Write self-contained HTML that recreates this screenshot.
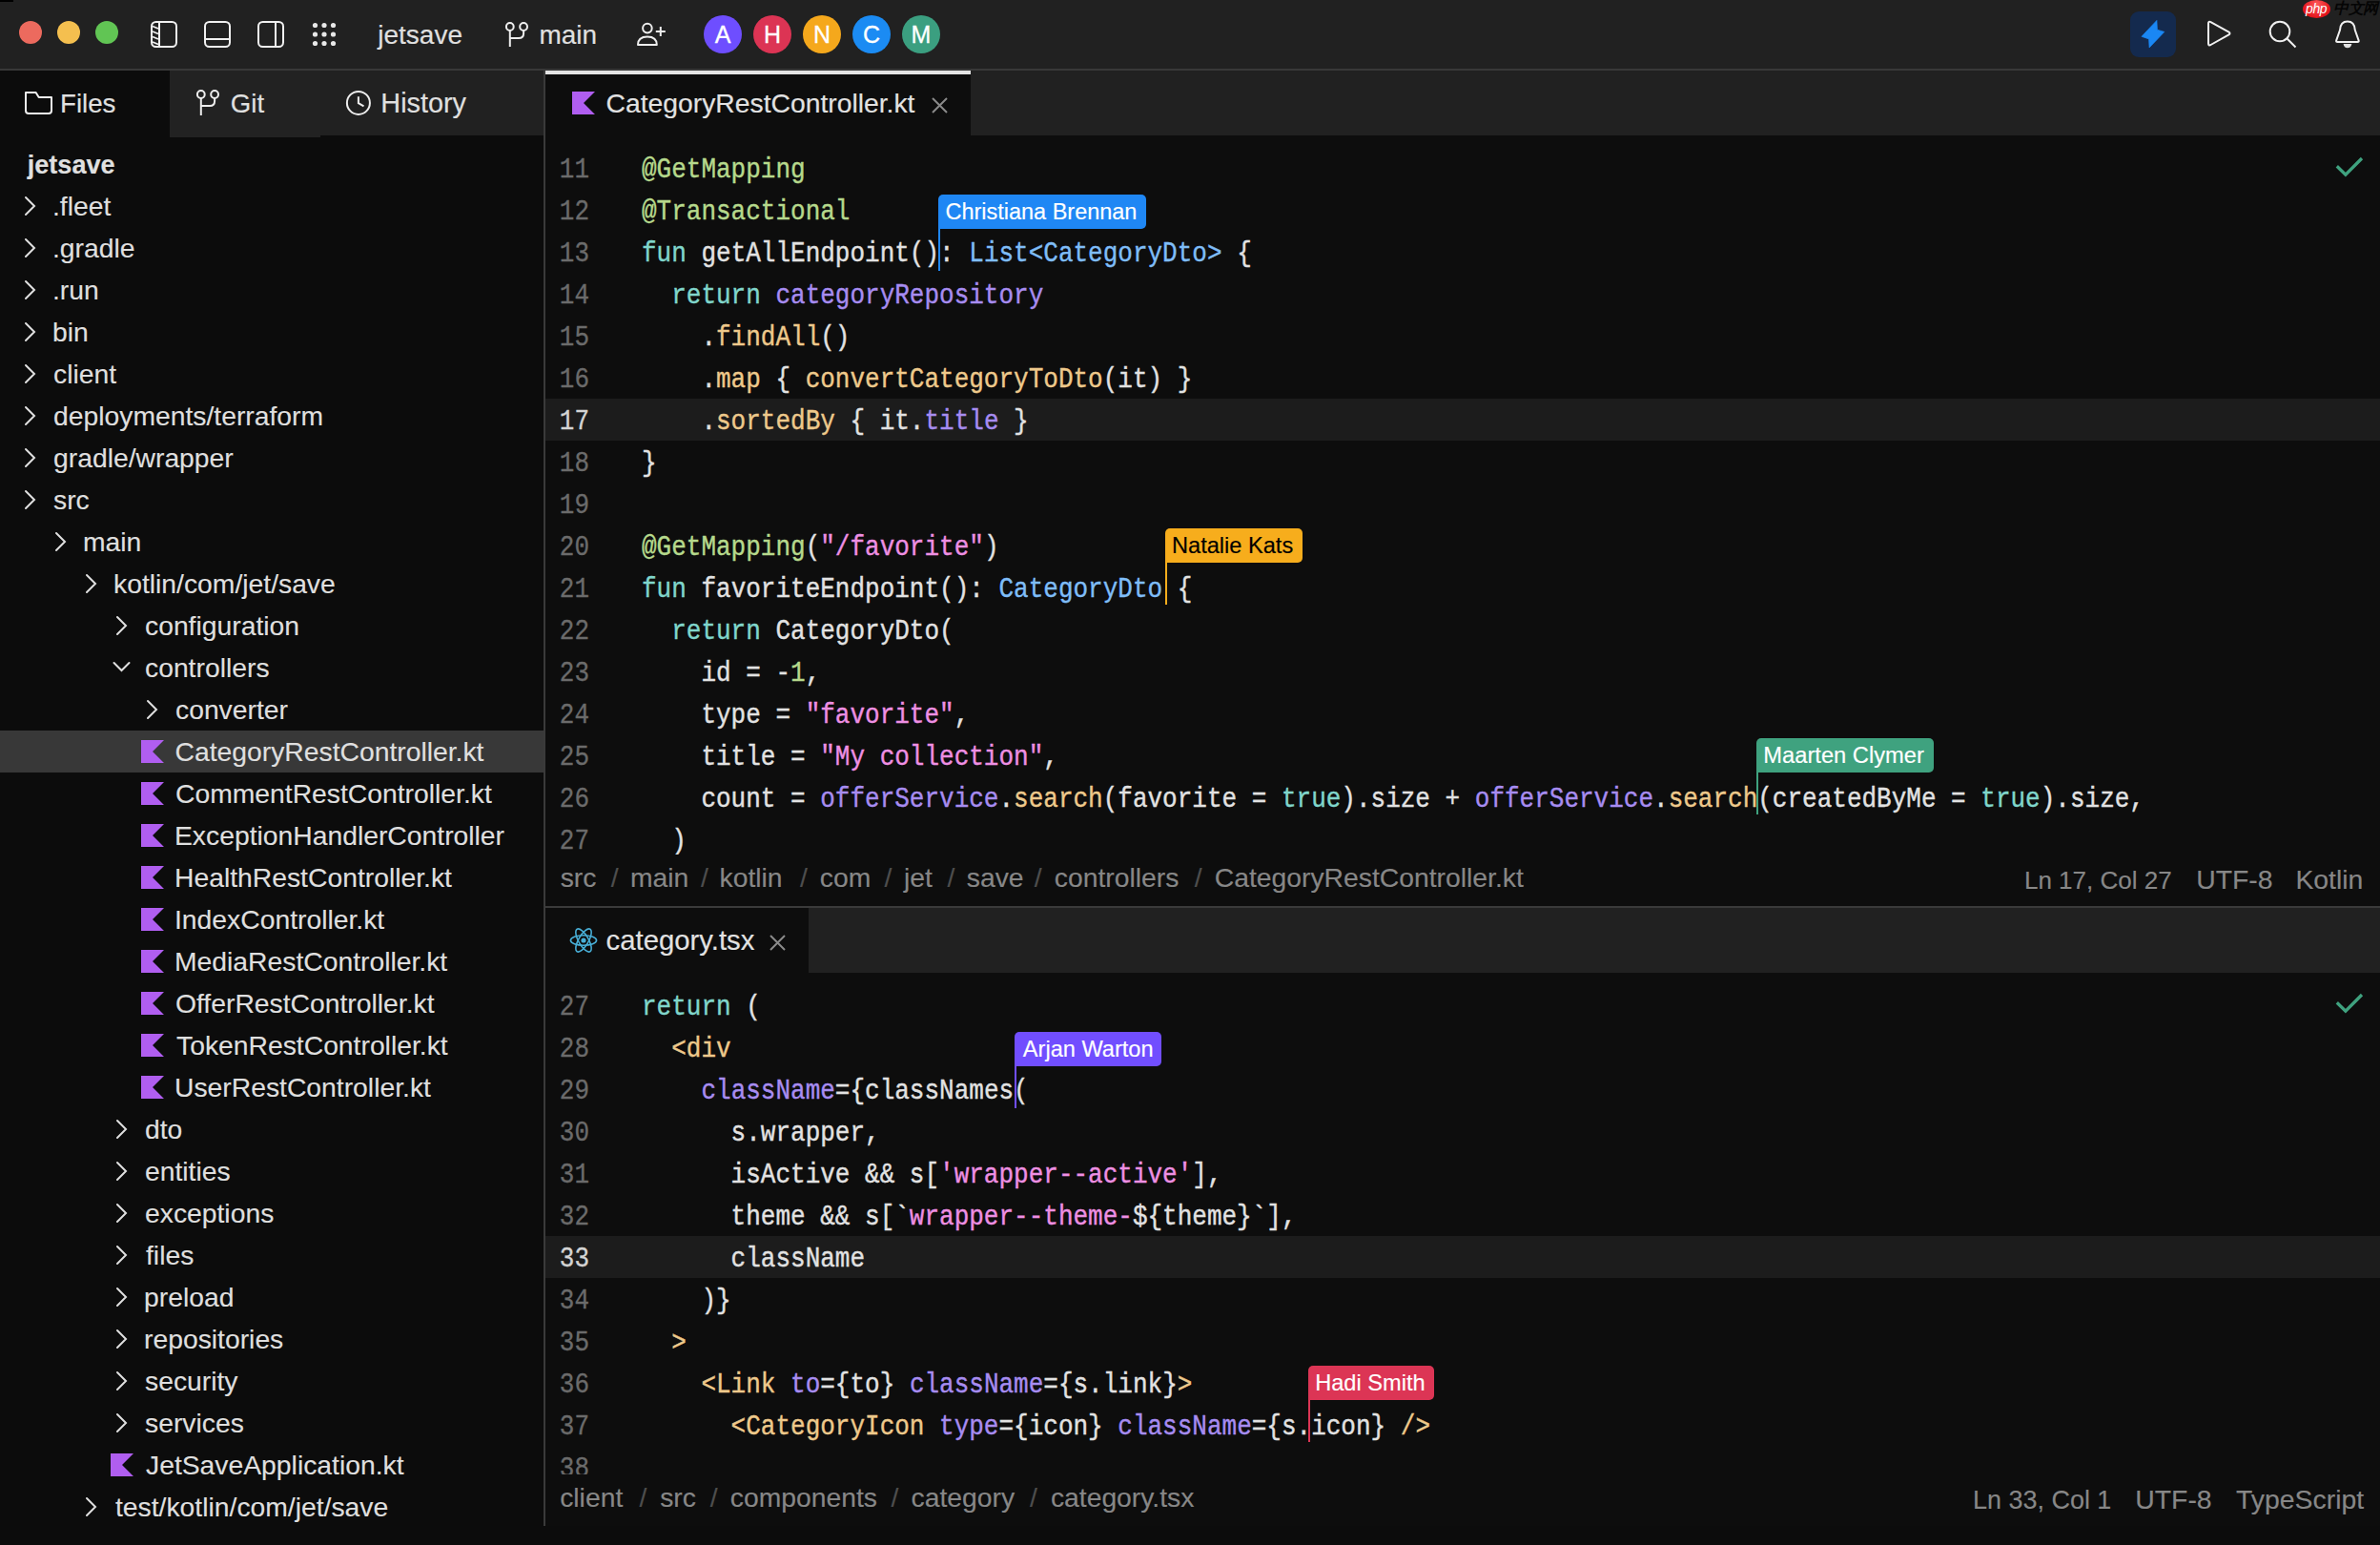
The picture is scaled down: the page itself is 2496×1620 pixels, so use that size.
<!DOCTYPE html>
<html><head><meta charset="utf-8"><title>Fleet</title>
<style>
html,body{margin:0;padding:0;}
body{width:2496px;height:1620px;overflow:hidden;position:relative;background:#0c0c0c;font-family:'Liberation Sans', sans-serif;}
.abs{position:absolute;}
.t{position:absolute;white-space:pre;font-family:'Liberation Sans', sans-serif;line-height:40px;-webkit-text-stroke:0.15px currentColor;}
.ln{position:absolute;left:0;width:46px;height:44px;line-height:44px;text-align:right;font-family:'Liberation Mono', monospace;font-size:26px;padding-top:3px;box-sizing:border-box;transform:scaleY(1.10);transform-origin:0 32px;-webkit-text-stroke:0.3px currentColor;}
.code{position:absolute;left:101px;height:44px;line-height:44px;white-space:pre;font-family:'Liberation Mono', monospace;font-size:26px;padding-top:3px;box-sizing:border-box;transform:scaleY(1.10);transform-origin:0 32px;-webkit-text-stroke:0.35px currentColor;}
</style></head>
<body>
<div class="abs" style="left:0;top:0;width:2496px;height:72px;background:#212121"></div>
<div class="abs" style="left:0;top:72px;width:2496px;height:2px;background:#383838"></div>
<div class="abs" style="left:0;top:0;width:14px;height:2px;background:#000"></div>
<div class="abs" style="left:20px;top:22px;width:24px;height:24px;border-radius:50%;background:#ec6a5e"></div>
<div class="abs" style="left:60px;top:22px;width:24px;height:24px;border-radius:50%;background:#f4bf4f"></div>
<div class="abs" style="left:100px;top:22px;width:24px;height:24px;border-radius:50%;background:#61c554"></div>
<svg class="abs" style="left:157px;top:21px" width="30" height="30" viewBox="0 0 30 30" fill="none"><rect x="2" y="2" width="26" height="26" rx="4.5" stroke="#f0f0f0" stroke-width="2"/><line x1="10" y1="2" x2="10" y2="28" stroke="#f0f0f0" stroke-width="2"/><line x1="3" y1="6.5" x2="9" y2="9.0" stroke="#f0f0f0" stroke-width="1.8"/><line x1="3" y1="12" x2="9" y2="14.5" stroke="#f0f0f0" stroke-width="1.8"/><line x1="3" y1="17.5" x2="9" y2="20.0" stroke="#f0f0f0" stroke-width="1.8"/><line x1="3" y1="23" x2="9" y2="25.5" stroke="#f0f0f0" stroke-width="1.8"/></svg>
<svg class="abs" style="left:213px;top:21px" width="30" height="30" viewBox="0 0 30 30" fill="none"><rect x="2" y="2" width="26" height="26" rx="4.5" stroke="#f0f0f0" stroke-width="2"/><line x1="2" y1="20" x2="28" y2="20" stroke="#f0f0f0" stroke-width="2"/></svg>
<svg class="abs" style="left:269px;top:21px" width="30" height="30" viewBox="0 0 30 30" fill="none"><rect x="2" y="2" width="26" height="26" rx="4.5" stroke="#f0f0f0" stroke-width="2"/><line x1="20" y1="2" x2="20" y2="28" stroke="#f0f0f0" stroke-width="2"/></svg>
<svg class="abs" style="left:326px;top:22px" width="28" height="28" viewBox="0 0 28 28" fill="none"><circle cx="4.5" cy="4.5" r="2.6" fill="#e8e8e8"/><circle cx="4.5" cy="14.0" r="2.6" fill="#e8e8e8"/><circle cx="4.5" cy="23.5" r="2.6" fill="#e8e8e8"/><circle cx="14.0" cy="4.5" r="2.6" fill="#e8e8e8"/><circle cx="14.0" cy="14.0" r="2.6" fill="#e8e8e8"/><circle cx="14.0" cy="23.5" r="2.6" fill="#e8e8e8"/><circle cx="23.5" cy="4.5" r="2.6" fill="#e8e8e8"/><circle cx="23.5" cy="14.0" r="2.6" fill="#e8e8e8"/><circle cx="23.5" cy="23.5" r="2.6" fill="#e8e8e8"/></svg>
<div class="t" style="left:396.30px;top:17.20px;font-size:27.99px;color:#e0e0e0;font-weight:normal">jetsave</div>
<svg class="abs" style="left:526px;top:20px" width="30" height="32" viewBox="0 0 30 32" fill="none"><circle cx="8.8" cy="8" r="3.9" stroke="#eeeeee" stroke-width="2"/><circle cx="23.1" cy="8" r="3.9" stroke="#eeeeee" stroke-width="2"/><path d="M8.8 12 V29" stroke="#eeeeee" stroke-width="2"/><path d="M23.1 12 V15 Q23.1 20 18 20 H8.8" stroke="#eeeeee" stroke-width="2"/></svg>
<div class="t" style="left:565.40px;top:17.20px;font-size:27.959px;color:#e0e0e0;font-weight:normal">main</div>
<svg class="abs" style="left:664px;top:20px" width="34" height="32" viewBox="0 0 34 32" fill="none"><circle cx="14.9" cy="9.6" r="4.8" stroke="#eeeeee" stroke-width="2"/><path d="M5 27 Q5 18.5 14.9 18.5 Q24.8 18.5 24.8 27 Z" stroke="#eeeeee" stroke-width="2" stroke-linejoin="round"/><path d="M28.8 7.9 V17.9 M23.8 12.9 H33.8" stroke="#eeeeee" stroke-width="2"/></svg>
<div class="abs" style="left:738px;top:16px;width:40px;height:40px;border-radius:50%;background:#6e4eff"></div>
<div class="abs" style="left:738px;top:16px;width:40px;height:40px;line-height:40px;text-align:center;font-family:'Liberation Sans', sans-serif;font-size:25px;color:#fff;-webkit-text-stroke:0.3px #fff">A</div>
<div class="abs" style="left:790px;top:16px;width:40px;height:40px;border-radius:50%;background:#dc3454"></div>
<div class="abs" style="left:790px;top:16px;width:40px;height:40px;line-height:40px;text-align:center;font-family:'Liberation Sans', sans-serif;font-size:25px;color:#fff;-webkit-text-stroke:0.3px #fff">H</div>
<div class="abs" style="left:842px;top:16px;width:40px;height:40px;border-radius:50%;background:#f5a81c"></div>
<div class="abs" style="left:842px;top:16px;width:40px;height:40px;line-height:40px;text-align:center;font-family:'Liberation Sans', sans-serif;font-size:25px;color:#fff;-webkit-text-stroke:0.3px #fff">N</div>
<div class="abs" style="left:894px;top:16px;width:40px;height:40px;border-radius:50%;background:#1b8bf3"></div>
<div class="abs" style="left:894px;top:16px;width:40px;height:40px;line-height:40px;text-align:center;font-family:'Liberation Sans', sans-serif;font-size:25px;color:#fff;-webkit-text-stroke:0.3px #fff">C</div>
<div class="abs" style="left:946px;top:16px;width:40px;height:40px;border-radius:50%;background:#3b9f80"></div>
<div class="abs" style="left:946px;top:16px;width:40px;height:40px;line-height:40px;text-align:center;font-family:'Liberation Sans', sans-serif;font-size:25px;color:#fff;-webkit-text-stroke:0.3px #fff">M</div>
<div class="abs" style="left:2234px;top:12px;width:48px;height:48px;border-radius:9px;background:#142a4e"></div>
<svg class="abs" style="left:2234px;top:12px" width="48" height="48" viewBox="0 0 48 48" fill="none"><path d="M27.9 9.4 L28.4 19.2 L35.8 21.4 L20.1 37.9 L19.6 28.9 L12 26.3 Z" fill="#1a87f4" stroke="#1a87f4" stroke-width="0.7" stroke-linejoin="round"/></svg>
<svg class="abs" style="left:2310px;top:18px" width="34" height="36" viewBox="0 0 34 36" fill="none"><path d="M6 6.5 Q6 4 8.5 5.2 L27.5 15.6 Q29.5 17 27.5 18.4 L8.5 29 Q6 30.2 6 27.7 Z" stroke="#f0f0f0" stroke-width="2" stroke-linejoin="round"/></svg>
<svg class="abs" style="left:2374px;top:16px" width="40" height="40" viewBox="0 0 40 40" fill="none"><circle cx="17" cy="17" r="10.3" stroke="#f0f0f0" stroke-width="2"/><path d="M24.3 24.3 L33.5 33.5" stroke="#f0f0f0" stroke-width="2"/></svg>
<svg class="abs" style="left:2444px;top:16px" width="36" height="40" viewBox="0 0 36 40" fill="none"><path d="M17.9 6.6 C11.8 6.6 10.3 10.5 10 15.5 L6.2 26.4 Q5.7 28 7.4 28 H28.4 Q30.1 28 29.6 26.4 L25.8 15.5 C25.5 10.5 24 6.6 17.9 6.6 Z" stroke="#f0f0f0" stroke-width="2" stroke-linejoin="round"/><path d="M13.6 30 H22.4 Q21.6 34.2 17.9 34.2 Q14.2 34.2 13.6 30 Z" fill="#e0e0e0"/></svg>
<div class="abs" style="left:2415px;top:0px;width:29px;height:19px;border-radius:50%;background:radial-gradient(ellipse at 50% 25%, #ff5a5a, #e3141c 70%)"></div>
<div class="abs" style="left:2418px;top:1px;font-family:'Liberation Sans', sans-serif;font-size:14px;line-height:16px;font-style:italic;color:#fff;letter-spacing:-0.4px">php</div>
<div class="abs" style="left:2447px;top:1px;font-family:'Liberation Sans', sans-serif;font-size:16px;line-height:16px;font-style:italic;font-weight:bold;color:#050505;letter-spacing:-0.5px">中文网</div>
<div class="abs" style="left:0;top:74px;width:570px;height:1546px;background:#0c0c0c"></div>
<div class="abs" style="left:178px;top:74px;width:158px;height:70px;background:#222222"></div>
<div class="abs" style="left:336px;top:74px;width:234px;height:68px;background:#212121"></div>
<svg class="abs" style="left:24px;top:94px" width="32" height="28" viewBox="0 0 32 28" fill="none"><path d="M3 3 H13.6 L16.7 8 H30 V22 Q30 25 27 25 H6 Q3 25 3 22 Z" stroke="#f0f0f0" stroke-width="2" stroke-linejoin="round"/></svg>
<div class="t" style="left:63.00px;top:89.00px;font-size:27.702px;color:#e0e0e0;font-weight:normal">Files</div>
<svg class="abs" style="left:202px;top:92px" width="32" height="32" viewBox="0 0 32 32" fill="none"><circle cx="8.8" cy="7" r="3.9" stroke="#eeeeee" stroke-width="2"/><circle cx="23.1" cy="7" r="3.9" stroke="#eeeeee" stroke-width="2"/><path d="M8.8 11 V29" stroke="#eeeeee" stroke-width="2"/><path d="M23.1 11 V14 Q23.1 19 18 19 H8.8" stroke="#eeeeee" stroke-width="2"/></svg>
<div class="t" style="left:241.80px;top:89.40px;font-size:27.633px;color:#e0e0e0;font-weight:normal">Git</div>
<svg class="abs" style="left:360px;top:92px" width="32" height="32" viewBox="0 0 32 32" fill="none"><circle cx="15.9" cy="15.9" r="12" stroke="#eeeeee" stroke-width="2"/><path d="M15.9 9.2 V16.2 L21.5 19.4" stroke="#eeeeee" stroke-width="2"/></svg>
<div class="t" style="left:399.30px;top:88.40px;font-size:28.859px;color:#e0e0e0;font-weight:normal">History</div>
<div class="abs" style="left:0;top:766px;width:570px;height:44px;background:#383838"></div>
<div class="t" style="left:28.80px;top:153.00px;font-size:27.055px;color:#e0e0e0;font-weight:bold">jetsave</div>
<svg class="abs" style="left:25px;top:205px" width="14" height="22" viewBox="0 0 14 22" fill="none"><path d="M2 2 L11 11 L2 20" stroke="#e0e0e0" stroke-width="2" stroke-linecap="round"/></svg>
<div class="t" style="left:55.00px;top:196.00px;font-size:28.3px;color:#dfdfdf;font-weight:normal">.fleet</div>
<svg class="abs" style="left:25px;top:249px" width="14" height="22" viewBox="0 0 14 22" fill="none"><path d="M2 2 L11 11 L2 20" stroke="#e0e0e0" stroke-width="2" stroke-linecap="round"/></svg>
<div class="t" style="left:55.00px;top:240.00px;font-size:28.3px;color:#dfdfdf;font-weight:normal">.gradle</div>
<svg class="abs" style="left:25px;top:293px" width="14" height="22" viewBox="0 0 14 22" fill="none"><path d="M2 2 L11 11 L2 20" stroke="#e0e0e0" stroke-width="2" stroke-linecap="round"/></svg>
<div class="t" style="left:55.00px;top:284.00px;font-size:28.3px;color:#dfdfdf;font-weight:normal">.run</div>
<svg class="abs" style="left:25px;top:337px" width="14" height="22" viewBox="0 0 14 22" fill="none"><path d="M2 2 L11 11 L2 20" stroke="#e0e0e0" stroke-width="2" stroke-linecap="round"/></svg>
<div class="t" style="left:55.00px;top:328.00px;font-size:28.3px;color:#dfdfdf;font-weight:normal">bin</div>
<svg class="abs" style="left:25px;top:381px" width="14" height="22" viewBox="0 0 14 22" fill="none"><path d="M2 2 L11 11 L2 20" stroke="#e0e0e0" stroke-width="2" stroke-linecap="round"/></svg>
<div class="t" style="left:56.00px;top:372.00px;font-size:28.3px;color:#dfdfdf;font-weight:normal">client</div>
<svg class="abs" style="left:25px;top:425px" width="14" height="22" viewBox="0 0 14 22" fill="none"><path d="M2 2 L11 11 L2 20" stroke="#e0e0e0" stroke-width="2" stroke-linecap="round"/></svg>
<div class="t" style="left:56.00px;top:416.00px;font-size:28.3px;color:#dfdfdf;font-weight:normal">deployments/terraform</div>
<svg class="abs" style="left:25px;top:469px" width="14" height="22" viewBox="0 0 14 22" fill="none"><path d="M2 2 L11 11 L2 20" stroke="#e0e0e0" stroke-width="2" stroke-linecap="round"/></svg>
<div class="t" style="left:56.00px;top:460.00px;font-size:28.3px;color:#dfdfdf;font-weight:normal">gradle/wrapper</div>
<svg class="abs" style="left:25px;top:513px" width="14" height="22" viewBox="0 0 14 22" fill="none"><path d="M2 2 L11 11 L2 20" stroke="#e0e0e0" stroke-width="2" stroke-linecap="round"/></svg>
<div class="t" style="left:56.00px;top:504.00px;font-size:28.3px;color:#dfdfdf;font-weight:normal">src</div>
<svg class="abs" style="left:57px;top:557px" width="14" height="22" viewBox="0 0 14 22" fill="none"><path d="M2 2 L11 11 L2 20" stroke="#e0e0e0" stroke-width="2" stroke-linecap="round"/></svg>
<div class="t" style="left:87.00px;top:548.00px;font-size:28.3px;color:#dfdfdf;font-weight:normal">main</div>
<svg class="abs" style="left:89px;top:601px" width="14" height="22" viewBox="0 0 14 22" fill="none"><path d="M2 2 L11 11 L2 20" stroke="#e0e0e0" stroke-width="2" stroke-linecap="round"/></svg>
<div class="t" style="left:119.00px;top:592.00px;font-size:28.3px;color:#dfdfdf;font-weight:normal">kotlin/com/jet/save</div>
<svg class="abs" style="left:121px;top:645px" width="14" height="22" viewBox="0 0 14 22" fill="none"><path d="M2 2 L11 11 L2 20" stroke="#e0e0e0" stroke-width="2" stroke-linecap="round"/></svg>
<div class="t" style="left:152.00px;top:636.00px;font-size:28.3px;color:#dfdfdf;font-weight:normal">configuration</div>
<svg class="abs" style="left:118px;top:693px" width="20" height="14" viewBox="0 0 20 14" fill="none"><path d="M1.5 2 L9.5 10 L17.5 2" stroke="#e0e0e0" stroke-width="2" stroke-linecap="round"/></svg>
<div class="t" style="left:152.00px;top:680.00px;font-size:28.3px;color:#dfdfdf;font-weight:normal">controllers</div>
<svg class="abs" style="left:153px;top:733px" width="14" height="22" viewBox="0 0 14 22" fill="none"><path d="M2 2 L11 11 L2 20" stroke="#e0e0e0" stroke-width="2" stroke-linecap="round"/></svg>
<div class="t" style="left:184.00px;top:724.00px;font-size:28.3px;color:#dfdfdf;font-weight:normal">converter</div>
<svg class="abs" style="left:148px;top:776px" width="24" height="24" viewBox="0 0 24 24" fill="none"><path d="M0 0 H24 L12 12 L24 24 H0 Z" fill="#b05ef0"/></svg>
<div class="t" style="left:183.50px;top:768.00px;font-size:28.304px;color:#dfdfdf;font-weight:normal">CategoryRestController.kt</div>
<svg class="abs" style="left:148px;top:820px" width="24" height="24" viewBox="0 0 24 24" fill="none"><path d="M0 0 H24 L12 12 L24 24 H0 Z" fill="#b05ef0"/></svg>
<div class="t" style="left:184.00px;top:812.00px;font-size:28.3px;color:#dfdfdf;font-weight:normal">CommentRestController.kt</div>
<svg class="abs" style="left:148px;top:864px" width="24" height="24" viewBox="0 0 24 24" fill="none"><path d="M0 0 H24 L12 12 L24 24 H0 Z" fill="#b05ef0"/></svg>
<div class="t" style="left:183.00px;top:856.00px;font-size:28.3px;color:#dfdfdf;font-weight:normal">ExceptionHandlerController</div>
<svg class="abs" style="left:148px;top:908px" width="24" height="24" viewBox="0 0 24 24" fill="none"><path d="M0 0 H24 L12 12 L24 24 H0 Z" fill="#b05ef0"/></svg>
<div class="t" style="left:183.00px;top:900.00px;font-size:28.3px;color:#dfdfdf;font-weight:normal">HealthRestController.kt</div>
<svg class="abs" style="left:148px;top:952px" width="24" height="24" viewBox="0 0 24 24" fill="none"><path d="M0 0 H24 L12 12 L24 24 H0 Z" fill="#b05ef0"/></svg>
<div class="t" style="left:183.00px;top:944.00px;font-size:28.3px;color:#dfdfdf;font-weight:normal">IndexController.kt</div>
<svg class="abs" style="left:148px;top:996px" width="24" height="24" viewBox="0 0 24 24" fill="none"><path d="M0 0 H24 L12 12 L24 24 H0 Z" fill="#b05ef0"/></svg>
<div class="t" style="left:183.00px;top:988.00px;font-size:28.3px;color:#dfdfdf;font-weight:normal">MediaRestController.kt</div>
<svg class="abs" style="left:148px;top:1040px" width="24" height="24" viewBox="0 0 24 24" fill="none"><path d="M0 0 H24 L12 12 L24 24 H0 Z" fill="#b05ef0"/></svg>
<div class="t" style="left:184.00px;top:1032.00px;font-size:28.3px;color:#dfdfdf;font-weight:normal">OfferRestController.kt</div>
<svg class="abs" style="left:148px;top:1084px" width="24" height="24" viewBox="0 0 24 24" fill="none"><path d="M0 0 H24 L12 12 L24 24 H0 Z" fill="#b05ef0"/></svg>
<div class="t" style="left:185.00px;top:1076.00px;font-size:28.3px;color:#dfdfdf;font-weight:normal">TokenRestController.kt</div>
<svg class="abs" style="left:148px;top:1128px" width="24" height="24" viewBox="0 0 24 24" fill="none"><path d="M0 0 H24 L12 12 L24 24 H0 Z" fill="#b05ef0"/></svg>
<div class="t" style="left:183.00px;top:1120.00px;font-size:28.3px;color:#dfdfdf;font-weight:normal">UserRestController.kt</div>
<svg class="abs" style="left:121px;top:1173px" width="14" height="22" viewBox="0 0 14 22" fill="none"><path d="M2 2 L11 11 L2 20" stroke="#e0e0e0" stroke-width="2" stroke-linecap="round"/></svg>
<div class="t" style="left:152.00px;top:1164.00px;font-size:28.3px;color:#dfdfdf;font-weight:normal">dto</div>
<svg class="abs" style="left:121px;top:1217px" width="14" height="22" viewBox="0 0 14 22" fill="none"><path d="M2 2 L11 11 L2 20" stroke="#e0e0e0" stroke-width="2" stroke-linecap="round"/></svg>
<div class="t" style="left:152.00px;top:1208.00px;font-size:28.3px;color:#dfdfdf;font-weight:normal">entities</div>
<svg class="abs" style="left:121px;top:1261px" width="14" height="22" viewBox="0 0 14 22" fill="none"><path d="M2 2 L11 11 L2 20" stroke="#e0e0e0" stroke-width="2" stroke-linecap="round"/></svg>
<div class="t" style="left:152.00px;top:1252.00px;font-size:28.3px;color:#dfdfdf;font-weight:normal">exceptions</div>
<svg class="abs" style="left:121px;top:1305px" width="14" height="22" viewBox="0 0 14 22" fill="none"><path d="M2 2 L11 11 L2 20" stroke="#e0e0e0" stroke-width="2" stroke-linecap="round"/></svg>
<div class="t" style="left:153.00px;top:1296.00px;font-size:28.3px;color:#dfdfdf;font-weight:normal">files</div>
<svg class="abs" style="left:121px;top:1349px" width="14" height="22" viewBox="0 0 14 22" fill="none"><path d="M2 2 L11 11 L2 20" stroke="#e0e0e0" stroke-width="2" stroke-linecap="round"/></svg>
<div class="t" style="left:151.00px;top:1340.00px;font-size:28.3px;color:#dfdfdf;font-weight:normal">preload</div>
<svg class="abs" style="left:121px;top:1393px" width="14" height="22" viewBox="0 0 14 22" fill="none"><path d="M2 2 L11 11 L2 20" stroke="#e0e0e0" stroke-width="2" stroke-linecap="round"/></svg>
<div class="t" style="left:151.00px;top:1384.00px;font-size:28.3px;color:#dfdfdf;font-weight:normal">repositories</div>
<svg class="abs" style="left:121px;top:1437px" width="14" height="22" viewBox="0 0 14 22" fill="none"><path d="M2 2 L11 11 L2 20" stroke="#e0e0e0" stroke-width="2" stroke-linecap="round"/></svg>
<div class="t" style="left:152.00px;top:1428.00px;font-size:28.3px;color:#dfdfdf;font-weight:normal">security</div>
<svg class="abs" style="left:121px;top:1481px" width="14" height="22" viewBox="0 0 14 22" fill="none"><path d="M2 2 L11 11 L2 20" stroke="#e0e0e0" stroke-width="2" stroke-linecap="round"/></svg>
<div class="t" style="left:152.00px;top:1472.00px;font-size:28.3px;color:#dfdfdf;font-weight:normal">services</div>
<svg class="abs" style="left:116px;top:1524px" width="24" height="24" viewBox="0 0 24 24" fill="none"><path d="M0 0 H24 L12 12 L24 24 H0 Z" fill="#b05ef0"/></svg>
<div class="t" style="left:153.00px;top:1516.00px;font-size:28.3px;color:#dfdfdf;font-weight:normal">JetSaveApplication.kt</div>
<svg class="abs" style="left:89px;top:1569px" width="14" height="22" viewBox="0 0 14 22" fill="none"><path d="M2 2 L11 11 L2 20" stroke="#e0e0e0" stroke-width="2" stroke-linecap="round"/></svg>
<div class="t" style="left:121.00px;top:1560.00px;font-size:28.3px;color:#dfdfdf;font-weight:normal">test/kotlin/com/jet/save</div>
<div class="abs" style="left:570px;top:74px;width:2px;height:1526px;background:#3a3a3a"></div>
<div class="abs" style="left:572px;top:74px;width:1924px;height:68px;background:#212121"></div>
<div class="abs" style="left:572px;top:74px;width:446px;height:68px;background:#0d0d0d"></div>
<div class="abs" style="left:572px;top:74px;width:446px;height:4px;background:#e4e4e4"></div>
<svg class="abs" style="left:600px;top:96px" width="24" height="24" viewBox="0 0 24 24" fill="none"><path d="M0 0 H24 L12 12 L24 24 H0 Z" fill="#b05ef0"/></svg>
<div class="t" style="left:635.60px;top:88.40px;font-size:28.295px;color:#e2e2e2;font-weight:normal">CategoryRestController.kt</div>
<svg class="abs" style="left:976px;top:100px" width="20" height="20" viewBox="0 0 20 20" fill="none"><path d="M2 3 L17 18 M17 3 L2 18" stroke="#8a8a8a" stroke-width="2"/></svg>
<div class="abs" style="left:572px;top:142px;width:1924px;height:754px;background:#0d0d0d;overflow:hidden">
<div class="ln" style="top:12px;color:#6b6b6b">11</div>
<div class="code" style="top:12px"><span style="color:#b6d98c">@GetMapping</span></div>
<div class="ln" style="top:56px;color:#6b6b6b">12</div>
<div class="code" style="top:56px"><span style="color:#b6d98c">@Transactional</span></div>
<div class="ln" style="top:100px;color:#6b6b6b">13</div>
<div class="code" style="top:100px"><span style="color:#80d6cb">fun </span><span style="color:#e2e2e2">getAllEndpoint</span><span style="color:#e2e2e2">(): </span><span style="color:#7fbdf8">List&lt;CategoryDto&gt;</span><span style="color:#e2e2e2"> {</span></div>
<div class="ln" style="top:144px;color:#6b6b6b">14</div>
<div class="code" style="top:144px"><span style="color:#80d6cb">  return </span><span style="color:#a78cf1">categoryRepository</span></div>
<div class="ln" style="top:188px;color:#6b6b6b">15</div>
<div class="code" style="top:188px"><span style="color:#e2e2e2">    .</span><span style="color:#eec98b">findAll</span><span style="color:#e2e2e2">()</span></div>
<div class="ln" style="top:232px;color:#6b6b6b">16</div>
<div class="code" style="top:232px"><span style="color:#e2e2e2">    .</span><span style="color:#eec98b">map</span><span style="color:#e2e2e2"> { </span><span style="color:#eec98b">convertCategoryToDto</span><span style="color:#e2e2e2">(it) }</span></div>
<div class="abs" style="left:0;top:276px;width:1924px;height:44px;background:#1c1c1c"></div>
<div class="ln" style="top:276px;color:#d4d4d4">17</div>
<div class="code" style="top:276px"><span style="color:#e2e2e2">    .</span><span style="color:#eec98b">sortedBy</span><span style="color:#e2e2e2"> { it.</span><span style="color:#a78cf1">title</span><span style="color:#e2e2e2"> }</span></div>
<div class="ln" style="top:320px;color:#6b6b6b">18</div>
<div class="code" style="top:320px"><span style="color:#e2e2e2">}</span></div>
<div class="ln" style="top:364px;color:#6b6b6b">19</div>
<div class="code" style="top:364px"><span style="color:#e2e2e2"></span></div>
<div class="ln" style="top:408px;color:#6b6b6b">20</div>
<div class="code" style="top:408px"><span style="color:#b6d98c">@GetMapping</span><span style="color:#e2e2e2">(</span><span style="color:#ee8fe3">&quot;/favorite&quot;</span><span style="color:#e2e2e2">)</span></div>
<div class="ln" style="top:452px;color:#6b6b6b">21</div>
<div class="code" style="top:452px"><span style="color:#80d6cb">fun </span><span style="color:#e2e2e2">favoriteEndpoint</span><span style="color:#e2e2e2">(): </span><span style="color:#7fbdf8">CategoryDto</span><span style="color:#e2e2e2"> {</span></div>
<div class="ln" style="top:496px;color:#6b6b6b">22</div>
<div class="code" style="top:496px"><span style="color:#80d6cb">  return </span><span style="color:#e2e2e2">CategoryDto(</span></div>
<div class="ln" style="top:540px;color:#6b6b6b">23</div>
<div class="code" style="top:540px"><span style="color:#e2e2e2">    id = -</span><span style="color:#b6d98c">1</span><span style="color:#e2e2e2">,</span></div>
<div class="ln" style="top:584px;color:#6b6b6b">24</div>
<div class="code" style="top:584px"><span style="color:#e2e2e2">    type = </span><span style="color:#ee8fe3">&quot;favorite&quot;</span><span style="color:#e2e2e2">,</span></div>
<div class="ln" style="top:628px;color:#6b6b6b">25</div>
<div class="code" style="top:628px"><span style="color:#e2e2e2">    title = </span><span style="color:#ee8fe3">&quot;My collection&quot;</span><span style="color:#e2e2e2">,</span></div>
<div class="ln" style="top:672px;color:#6b6b6b">26</div>
<div class="code" style="top:672px"><span style="color:#e2e2e2">    count = </span><span style="color:#a78cf1">offerService</span><span style="color:#e2e2e2">.</span><span style="color:#eec98b">search</span><span style="color:#e2e2e2">(favorite = </span><span style="color:#80d6cb">true</span><span style="color:#e2e2e2">).size + </span><span style="color:#a78cf1">offerService</span><span style="color:#e2e2e2">.</span><span style="color:#eec98b">search</span><span style="color:#e2e2e2">(createdByMe = </span><span style="color:#80d6cb">true</span><span style="color:#e2e2e2">).size,</span></div>
<div class="ln" style="top:716px;color:#6b6b6b">27</div>
<div class="code" style="top:716px"><span style="color:#e2e2e2">  )</span></div>
</div>
<svg class="abs" style="left:2446px;top:161px" width="36" height="28" viewBox="0 0 36 28" fill="none"><path d="M4.8 13.2 L13.9 22.1 L31 5" stroke="#3fa27f" stroke-width="3.3"/></svg>
<div class="abs" style="left:572px;top:896px;width:1924px;height:54px;background:#0d0d0d"></div>
<div class="abs" style="left:572px;top:950px;width:1924px;height:2px;background:#3a3a3a"></div>
<div class="t" style="left:587.70px;top:900.00px;font-size:28.3px;color:#878787;font-weight:normal">src</div>
<div class="t" style="left:640.70px;top:900.00px;font-size:28.3px;color:#4e4e4e;font-weight:normal">/</div>
<div class="t" style="left:661.00px;top:900.00px;font-size:28.3px;color:#878787;font-weight:normal">main</div>
<div class="t" style="left:735.10px;top:900.00px;font-size:28.3px;color:#4e4e4e;font-weight:normal">/</div>
<div class="t" style="left:754.50px;top:900.00px;font-size:28.3px;color:#878787;font-weight:normal">kotlin</div>
<div class="t" style="left:838.90px;top:900.00px;font-size:28.3px;color:#4e4e4e;font-weight:normal">/</div>
<div class="t" style="left:859.80px;top:900.00px;font-size:28.3px;color:#878787;font-weight:normal">com</div>
<div class="t" style="left:927.40px;top:900.00px;font-size:28.3px;color:#4e4e4e;font-weight:normal">/</div>
<div class="t" style="left:948.00px;top:900.00px;font-size:28.3px;color:#878787;font-weight:normal">jet</div>
<div class="t" style="left:993.40px;top:900.00px;font-size:28.3px;color:#4e4e4e;font-weight:normal">/</div>
<div class="t" style="left:1013.80px;top:900.00px;font-size:28.3px;color:#878787;font-weight:normal">save</div>
<div class="t" style="left:1084.70px;top:900.00px;font-size:28.3px;color:#4e4e4e;font-weight:normal">/</div>
<div class="t" style="left:1105.80px;top:900.00px;font-size:28.3px;color:#878787;font-weight:normal">controllers</div>
<div class="t" style="left:1252.70px;top:900.00px;font-size:28.3px;color:#4e4e4e;font-weight:normal">/</div>
<div class="t" style="left:1273.80px;top:900.00px;font-size:28.3px;color:#878787;font-weight:normal">CategoryRestController.kt</div>
<div class="t" style="left:2122.90px;top:903.40px;font-size:26.056px;color:#878787;font-weight:normal">Ln 17, Col 27</div>
<div class="t" style="left:2303.20px;top:902.40px;font-size:28.4px;color:#878787;font-weight:normal">UTF-8</div>
<div class="t" style="left:2407.40px;top:902.40px;font-size:28.4px;color:#878787;font-weight:normal">Kotlin</div>
<div class="abs" style="left:572px;top:952px;width:1924px;height:68px;background:#212121"></div>
<div class="abs" style="left:572px;top:952px;width:276px;height:68px;background:#0d0d0d"></div>
<svg class="abs" style="left:596px;top:970px" width="32" height="32" viewBox="0 0 32 32" fill="none"><g stroke="#48aed6" stroke-width="1.6" fill="none" transform="translate(16 16)"><ellipse rx="13.6" ry="5.2"/><ellipse rx="13.6" ry="5.2" transform="rotate(60)"/><ellipse rx="13.6" ry="5.2" transform="rotate(120)"/></g><circle cx="16" cy="16" r="2.6" fill="#48aed6"/></svg>
<div class="t" style="left:635.60px;top:966.00px;font-size:29.309px;color:#e2e2e2;font-weight:normal">category.tsx</div>
<svg class="abs" style="left:806px;top:978px" width="20" height="20" viewBox="0 0 20 20" fill="none"><path d="M2 3 L17 18 M17 3 L2 18" stroke="#8a8a8a" stroke-width="2"/></svg>
<div class="abs" style="left:572px;top:1020px;width:1924px;height:526px;background:#0d0d0d;overflow:hidden">
<div class="ln" style="top:12px;color:#6b6b6b">27</div>
<div class="code" style="top:12px"><span style="color:#80d6cb">return </span><span style="color:#e2e2e2">(</span></div>
<div class="ln" style="top:56px;color:#6b6b6b">28</div>
<div class="code" style="top:56px"><span style="color:#eec98b">  &lt;div</span></div>
<div class="ln" style="top:100px;color:#6b6b6b">29</div>
<div class="code" style="top:100px"><span style="color:#e2e2e2">    </span><span style="color:#a78cf1">className</span><span style="color:#e2e2e2">={classNames(</span></div>
<div class="ln" style="top:144px;color:#6b6b6b">30</div>
<div class="code" style="top:144px"><span style="color:#e2e2e2">      s.wrapper,</span></div>
<div class="ln" style="top:188px;color:#6b6b6b">31</div>
<div class="code" style="top:188px"><span style="color:#e2e2e2">      isActive &amp;&amp; s[</span><span style="color:#ee8fe3">&#x27;wrapper--active&#x27;</span><span style="color:#e2e2e2">],</span></div>
<div class="ln" style="top:232px;color:#6b6b6b">32</div>
<div class="code" style="top:232px"><span style="color:#e2e2e2">      theme &amp;&amp; s[`</span><span style="color:#ee8fe3">wrapper--theme-</span><span style="color:#e2e2e2">${theme}`],</span></div>
<div class="abs" style="left:0;top:276px;width:1924px;height:44px;background:#1c1c1c"></div>
<div class="ln" style="top:276px;color:#d4d4d4">33</div>
<div class="code" style="top:276px"><span style="color:#e2e2e2">      className</span></div>
<div class="ln" style="top:320px;color:#6b6b6b">34</div>
<div class="code" style="top:320px"><span style="color:#e2e2e2">    )}</span></div>
<div class="ln" style="top:364px;color:#6b6b6b">35</div>
<div class="code" style="top:364px"><span style="color:#eec98b">  &gt;</span></div>
<div class="ln" style="top:408px;color:#6b6b6b">36</div>
<div class="code" style="top:408px"><span style="color:#eec98b">    &lt;Link </span><span style="color:#a78cf1">to</span><span style="color:#e2e2e2">={to} </span><span style="color:#a78cf1">className</span><span style="color:#e2e2e2">={s.link}</span><span style="color:#eec98b">&gt;</span></div>
<div class="ln" style="top:452px;color:#6b6b6b">37</div>
<div class="code" style="top:452px"><span style="color:#eec98b">      &lt;CategoryIcon </span><span style="color:#a78cf1">type</span><span style="color:#e2e2e2">={icon} </span><span style="color:#a78cf1">className</span><span style="color:#e2e2e2">={s.icon} </span><span style="color:#eec98b">/&gt;</span></div>
<div class="ln" style="top:496px;color:#6b6b6b">38</div>
<div class="code" style="top:496px"><span style="color:#e2e2e2"></span></div>
</div>
<svg class="abs" style="left:2446px;top:1038px" width="36" height="28" viewBox="0 0 36 28" fill="none"><path d="M4.8 13.2 L13.9 22.1 L31 5" stroke="#3fa27f" stroke-width="3.3"/></svg>
<div class="abs" style="left:572px;top:1546px;width:1924px;height:54px;background:#0d0d0d"></div>
<div class="t" style="left:587.20px;top:1549.60px;font-size:28.3px;color:#878787;font-weight:normal">client</div>
<div class="t" style="left:670.60px;top:1549.60px;font-size:28.3px;color:#4e4e4e;font-weight:normal">/</div>
<div class="t" style="left:692.20px;top:1549.60px;font-size:28.3px;color:#878787;font-weight:normal">src</div>
<div class="t" style="left:744.70px;top:1549.60px;font-size:28.3px;color:#4e4e4e;font-weight:normal">/</div>
<div class="t" style="left:765.80px;top:1549.60px;font-size:28.3px;color:#878787;font-weight:normal">components</div>
<div class="t" style="left:934.40px;top:1549.60px;font-size:28.3px;color:#4e4e4e;font-weight:normal">/</div>
<div class="t" style="left:955.50px;top:1549.60px;font-size:28.3px;color:#878787;font-weight:normal">category</div>
<div class="t" style="left:1080.00px;top:1549.60px;font-size:28.3px;color:#4e4e4e;font-weight:normal">/</div>
<div class="t" style="left:1101.90px;top:1549.60px;font-size:28.3px;color:#878787;font-weight:normal">category.tsx</div>
<div class="t" style="left:2069.00px;top:1553.20px;font-size:26.961px;color:#878787;font-weight:normal">Ln 33, Col 1</div>
<div class="t" style="left:2239.20px;top:1552.20px;font-size:28.41px;color:#878787;font-weight:normal">UTF-8</div>
<div class="t" style="left:2345.00px;top:1552.20px;font-size:28.4px;color:#878787;font-weight:normal">TypeScript</div>
<div class="abs" style="left:984px;top:204px;width:218px;height:36px;background:#1f87f4;border-radius:5px 5px 5px 0"></div>
<div class="abs" style="left:984px;top:240px;width:2px;height:44px;background:#1f87f4"></div>
<div class="t" style="left:991.50px;top:202.10px;font-size:23.47px;color:#ffffff;font-weight:normal">Christiana Brennan</div>
<div class="abs" style="left:1222px;top:554px;width:144px;height:36px;background:#f7ad1c;border-radius:5px 5px 5px 0"></div>
<div class="abs" style="left:1222px;top:590px;width:2px;height:44px;background:#f7ad1c"></div>
<div class="t" style="left:1229.00px;top:552.00px;font-size:23.6px;color:#000000;font-weight:normal">Natalie Kats</div>
<div class="abs" style="left:1842px;top:774px;width:186px;height:36px;background:#3fa27f;border-radius:5px 5px 5px 0"></div>
<div class="abs" style="left:1842px;top:810px;width:2px;height:44px;background:#3fa27f"></div>
<div class="t" style="left:1849.30px;top:772.10px;font-size:23.714px;color:#ffffff;font-weight:normal">Maarten Clymer</div>
<div class="abs" style="left:1064px;top:1082px;width:154px;height:36px;background:#714eff;border-radius:5px 5px 5px 0"></div>
<div class="abs" style="left:1064px;top:1118px;width:2px;height:44px;background:#714eff"></div>
<div class="t" style="left:1072.80px;top:1080.20px;font-size:23.6px;color:#ffffff;font-weight:normal">Arjan Warton</div>
<div class="abs" style="left:1372px;top:1432px;width:132px;height:36px;background:#dc3555;border-radius:5px 5px 5px 0"></div>
<div class="abs" style="left:1372px;top:1468px;width:2px;height:44px;background:#dc3555"></div>
<div class="t" style="left:1379.20px;top:1430.20px;font-size:23.6px;color:#ffffff;font-weight:normal">Hadi Smith</div>
</body></html>
